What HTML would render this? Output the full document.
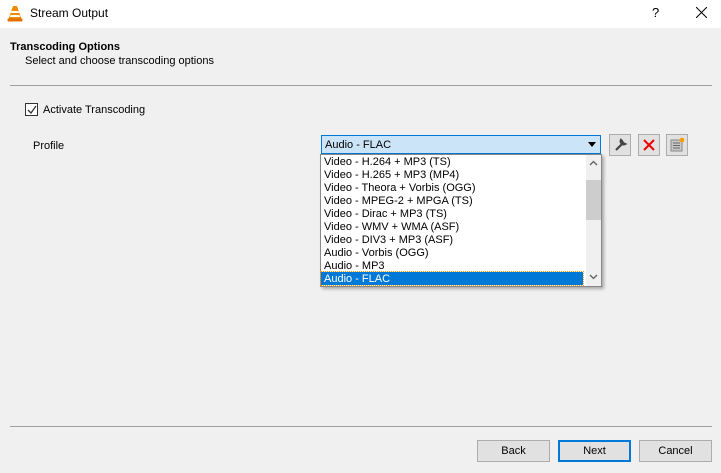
<html><head><style>
body{margin:0;width:721px;height:473px;background:#f0f0f0;font-family:"Liberation Sans",sans-serif;font-size:11px;color:#000;position:relative;overflow:hidden}
.a{position:absolute}
.btn{position:absolute;top:440px;width:71px;height:20px;border:1px solid #adadad;background:#e1e1e1;text-align:center;line-height:21px}
.it{height:13px;line-height:14px;padding-left:3px;font-size:11px;white-space:nowrap}
.ib{position:absolute;top:134px;width:20px;height:20px;border:1px solid #adadad;background:#e1e1e1}
</style></head><body>
<div class="a" style="left:0;top:0;width:721px;height:28px;background:#fff"></div>
<svg class="a" style="left:7px;top:5px" width="16" height="17" viewBox="0 0 16 17"><path d="M6 1h4l4.5 13H1.5z" fill="#f08a00"/><path d="M4.5 6h7l.7 2h-8.4zM3.5 10h9l.7 2H2.8z" fill="#fff"/><rect x="0.5" y="13.5" width="15" height="3" rx="1" fill="#e07000"/></svg>
<div class="a" style="left:30px;top:6px;font-size:12px">Stream Output</div>
<div class="a" style="left:652px;top:5px;font-size:13px">?</div>
<svg class="a" style="left:696px;top:7px" width="11" height="11"><path d="M0 0L11 11M11 0L0 11" stroke="#000" stroke-width="1"/></svg>
<div class="a" style="left:10px;top:41px;font-weight:bold">Transcoding Options</div>
<div class="a" style="left:25px;top:55px">Select and choose transcoding options</div>
<div class="a" style="left:10px;top:85px;width:702px;height:1px;background:#a0a0a0"></div>
<div class="a" style="left:25px;top:103px;width:11px;height:11px;border:1px solid #333;background:#fff"></div>
<svg class="a" style="left:26px;top:104px" width="12" height="12"><path d="M2 6l3 3 5-7" stroke="#333" stroke-width="1.3" fill="none"/></svg>
<div class="a" style="left:43px;top:104px">Activate Transcoding</div>
<div class="a" style="left:33px;top:140px">Profile</div>
<div class="a" style="left:321px;top:135px;width:278px;height:17px;border:1px solid #0078d7;background:#cce4f7"><span style="position:absolute;left:3px;top:3px">Audio - FLAC</span><svg style="position:absolute;right:4px;top:6px" width="8" height="5"><path d="M0 0h8L4 5z"/></svg></div>
<div class="ib" style="left:609px"><svg width="20" height="20"><path d="M6 15l6-6M11 5a3 3 0 0 0 4 4l-2-1-1-2z" stroke="#444" stroke-width="2.2" fill="none"/></svg></div>
<div class="ib" style="left:638px"><svg width="20" height="20"><path d="M5 5l10 10M15 5L5 15" stroke="#e00" stroke-width="2"/></svg></div>
<div class="ib" style="left:666px"><svg width="20" height="20"><rect x="4" y="5" width="11" height="11" fill="#c8c8c8" stroke="#888"/><path d="M6 8h7M6 10.5h7M6 13h7" stroke="#666"/><circle cx="15" cy="5" r="2.3" fill="#f90"/></svg></div>
<div class="a" style="left:320px;top:154px;width:280px;height:131px;background:#fff;border:1px solid #888;box-shadow:2px 2px 3px rgba(0,0,0,.3)">
<div class="it">Video - H.264 + MP3 (TS)</div>
<div class="it">Video - H.265 + MP3 (MP4)</div>
<div class="it">Video - Theora + Vorbis (OGG)</div>
<div class="it">Video - MPEG-2 + MPGA (TS)</div>
<div class="it">Video - Dirac + MP3 (TS)</div>
<div class="it">Video - WMV + WMA (ASF)</div>
<div class="it">Video - DIV3 + MP3 (ASF)</div>
<div class="it">Audio - Vorbis (OGG)</div>
<div class="it">Audio - MP3</div>
<div class="it" style="background:#0078d7;color:#fff;width:259px;outline:1px dotted #f90">Audio - FLAC</div>
<div class="a" style="left:265px;top:0;width:15px;height:131px;background:#f0f0f0"></div>
<div class="a" style="left:265px;top:25px;width:15px;height:40px;background:#cdcdcd"></div>
<svg class="a" style="left:268px;top:5px" width="9" height="6"><path d="M1 5l3.5-3.5L8 5" stroke="#606060" stroke-width="1.3" fill="none"/></svg>
<svg class="a" style="left:268px;top:119px" width="9" height="6"><path d="M1 1l3.5 3.5L8 1" stroke="#606060" stroke-width="1.3" fill="none"/></svg>
</div>
<div class="a" style="left:10px;top:426px;width:702px;height:1px;background:#a0a0a0"></div>
<div class="btn" style="left:477px">Back</div>
<div class="btn" style="left:558px;border:2px solid #0078d7;width:69px;height:18px;line-height:19px">Next</div>
<div class="btn" style="left:639px">Cancel</div>
</body></html>
